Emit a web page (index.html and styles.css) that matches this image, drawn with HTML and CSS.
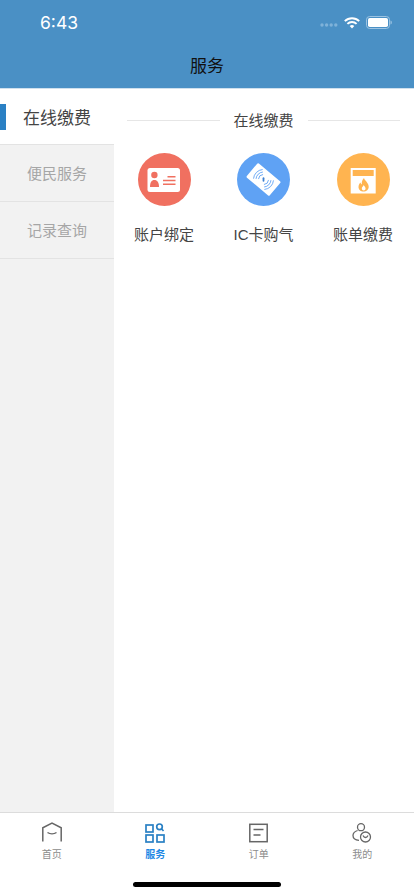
FILE: index.html
```html
<!DOCTYPE html>
<html lang="zh">
<head>
<meta charset="utf-8">
<title>服务</title>
<link rel="stylesheet" href="styles.css">
</head>
<body>
<div class="app">
  <header class="header">
    <div class="status">
      <span class="time">6:43</span>
      <div class="status-icons">
        <svg class="signal" width="18" height="4" viewBox="0 0 18 4"><g fill="#7fb2d9"><circle cx="2" cy="2" r="1.7"/><circle cx="6.6" cy="2" r="1.7"/><circle cx="11.2" cy="2" r="1.7"/><circle cx="15.8" cy="2" r="1.7"/></g></svg>
        <svg class="wifi" width="16" height="12" viewBox="0 0 16 12"><g fill="none" stroke="#fff" stroke-width="1.9"><path d="M.8 4.2a10.2 10.2 0 0 1 14.4 0"/><path d="M3.4 6.9a6.5 6.5 0 0 1 9.2 0"/></g><path d="M5.7 9.1a3.2 3.2 0 0 1 4.6 0L8 11.6z" fill="#fff"/></svg>
        <svg class="battery" width="26" height="13" viewBox="0 0 26 13"><rect x=".5" y=".5" width="23" height="12" rx="3.2" fill="none" stroke="#9cc3e2"/><rect x="2" y="2" width="20" height="9" rx="1.8" fill="#fff"/><path d="M24.5 4.500c.9.3 1.300 1.100 1.300 2s-.4 1.700-1.300 2z" fill="#9cc3e2"/></svg>
      </div>
    </div>
    <div class="nav-title">服务</div>
  </header>
  <main class="body">
    <nav class="side">
      <div class="side-item active"><span class="marker"></span>在线缴费</div>
      <div class="side-item">便民服务</div>
      <div class="side-item">记录查询</div>
    </nav>
    <section class="content">
      <div class="section-title"><span class="rule"></span><span>在线缴费</span><span class="rule"></span></div>
      <div class="grid">
        <div class="cell">
          <svg class="circle" viewBox="0 0 53 53"><circle cx="26.500" cy="26.500" r="26.500" fill="#f07060"/><rect x="9.500" y="15" width="32.500" height="24" rx="2.500" fill="#fff"/><circle cx="16.400" cy="22" r="3.200" fill="#f07060"/><path d="M12 34c0-4.800 1.600-7 4.400-7s4.600 2.200 4.600 7z" fill="#f07060"/><path d="M29.500 23h8v1.500h-8zM25 26.800h12.500v1.500H25zM25 30.600h12.500v1.500H25z" fill="#f07060"/></svg>
          <span class="label">账户绑定</span>
        </div>
        <div class="cell">
          <svg class="circle" viewBox="0 0 53 53"><circle cx="26.500" cy="26.500" r="26.500" fill="#5fa2f4"/><rect x="11.500" y="17.250" width="30" height="18.500" rx="1.200" fill="#fff" transform="rotate(40 26.500 26.500)"/><g fill="none" stroke="#5fa2f4" stroke-width=".9"><path d="M21.500 26.060A5 5 0 0 1 26.060 21.500"/><path d="M19.030 25.850A7.500 7.500 0 0 1 25.850 19.030"/><path d="M16.540 25.630A10 10 0 0 1 25.630 16.540"/><path d="M31.500 26.940A5 5 0 0 1 26.940 31.500"/><path d="M33.970 27.150A7.500 7.500 0 0 1 27.150 33.970"/><path d="M36.460 27.370A10 10 0 0 1 27.370 36.460"/></g><rect x="25.600" y="24.300" width="1.800" height="4.400" rx=".9" fill="#3d7fd0"/></svg>
          <span class="label">IC卡购气</span>
        </div>
        <div class="cell">
          <svg class="circle" viewBox="0 0 53 53"><circle cx="26.500" cy="26.500" r="26.500" fill="#ffb450"/><rect x="13.700" y="15" width="25" height="25.500" fill="#fff"/><rect x="15.700" y="17" width="21" height="6" fill="#ffb450"/><path d="M27 25c.6 2.600 4.700 4.800 4.700 8.700 0 2.900-2.300 4.900-5.100 4.900s-5.100-2-5.100-4.700c0-2.100 1-3.400 2-4.400.2 1 .6 1.700 1.300 2-.2-2.700.6-5 2.200-6.500z" fill="#ffb450"/><path d="M26.700 32c.3 1 1.900 1.800 1.900 3.500a1.900 1.900 0 0 1-3.800 0c0-1.500 1.400-2.200 1.900-3.500z" fill="#fff"/></svg>
          <span class="label">账单缴费</span>
        </div>
      </div>
    </section>
  </main>
  <footer class="tabbar">
    <div class="tabs">
      <div class="tab">
        <svg width="22" height="22" viewBox="0 0 22 22" fill="none" stroke="#666" stroke-width="1.500"><path d="M1.800 19.500V5.800L11 1l9.200 4.800v13.700"/><path d="M6.500 10.500c2.500 1.700 6.500 1.700 9 0"/></svg>
        <span>首页</span>
      </div>
      <div class="tab on">
        <svg width="20" height="20" viewBox="0 0 20 20" fill="none" stroke="#2a80c4" stroke-width="1.700"><rect x="1" y="2" width="7" height="7"/><rect x="1" y="12" width="7" height="7"/><rect x="12" y="12" width="7" height="7"/><circle cx="14.500" cy="3.800" r="2.800"/><path d="M16.500 5.800l2 2.200"/></svg>
        <span>服务</span>
      </div>
      <div class="tab">
        <svg width="19" height="19" viewBox="0 0 19 19" fill="none" stroke="#666" stroke-width="1.500"><rect x=".8" y=".8" width="17.400" height="17.400"/><path d="M4.500 6h10M4.500 11.500h7"/></svg>
        <span>订单</span>
      </div>
      <div class="tab">
        <svg width="20" height="20" viewBox="0 0 20 20" fill="none" stroke="#666" stroke-width="1.300"><circle cx="9" cy="4.200" r="3.500"/><path d="M5.600 7.500C2.500 8.500 1 10.500 1 12.500c0 2.800 2.500 4.500 6 4.800"/><circle cx="13.500" cy="14" r="5"/><path d="M11 12.500c.7 1.500 1.500 2 2.500 2s1.800-.5 2.500-2"/></svg>
        <span>我的</span>
      </div>
    </div>
    <div class="home-bar"></div>
  </footer>
</div>
</body>
</html>
```

FILE: styles.css
```css
* { box-sizing: border-box; }
html, body { margin: 0; padding: 0; }
body { font-family: "Liberation Sans", "Noto Sans CJK SC", sans-serif; background: #fff; }
.app { width: 414px; height: 896px; display: flex; flex-direction: column; overflow: hidden; }

.header { height: 89px; background: #4a90c5; flex: none; border-bottom: 1px solid #cfe0ee; }
.status { height: 44px; padding: 12px 22px 0 40px; display: flex; align-items: flex-start; justify-content: space-between; }
.time { color: #fff; font-size: 17.500px; line-height: 22px; font-family: Inter, "Liberation Sans", sans-serif; }
.status-icons { display: flex; align-items: center; gap: 6px; height: 21px; }
.signal { margin-top: 5px; }
.nav-title { text-align: center; font-size: 17px; line-height: 22px; color: #111; margin-top: 12px; }

.body { flex: 1; display: flex; min-height: 0; }
.side { width: 114px; flex: none; background: #f2f2f2; }
.side-item { height: 57px; border-bottom: 1px solid #e3e3e3; display: flex; align-items: center; justify-content: center; padding-bottom: 2px; font-size: 15px; color: #a6a6a6; position: relative; }
.side-item.active { height: 56px; background: #fff; color: #444; font-size: 17px; padding-bottom: 1px; }
.marker { position: absolute; left: 0; top: 15px; width: 6px; height: 26px; background: #2a80c4; }

.content { flex: 1; padding: 22px 14px 0 13px; }
.section-title { display: flex; align-items: center; gap: 14px; font-size: 15px; line-height: 20px; color: #444; }
.rule { flex: 1; height: 1px; background: #e6e6e6; margin-bottom: 1px; }
.grid { display: flex; gap: 33.500px; margin: 22px 0 0 4px; }
.cell { width: 66px; flex: none; display: flex; flex-direction: column; align-items: center; }
.circle { width: 53px; height: 53px; display: block; }
.label { margin-top: 19px; font-size: 15px; line-height: 20px; color: #444; white-space: nowrap; }

.tabbar { height: 84px; flex: none; border-top: 1px solid #dcdcdc; background: #fff; display: flex; flex-direction: column; }
.tabs { display: grid; grid-template-columns: repeat(4, 1fr); height: 69px; }
.tab { display: flex; flex-direction: column; align-items: center; font-size: 10px; color: #8c8c8c; height: 49px; padding-top: 9px; }
.tab svg { flex: none; height: 22px; }
.tab span { margin-top: auto; line-height: 14px; }
.tab.on span { color: #1e88e5; font-weight: 600; }
.home-bar { width: 148px; height: 5px; border-radius: 3px; background: #000; margin: 0 auto; }
```
